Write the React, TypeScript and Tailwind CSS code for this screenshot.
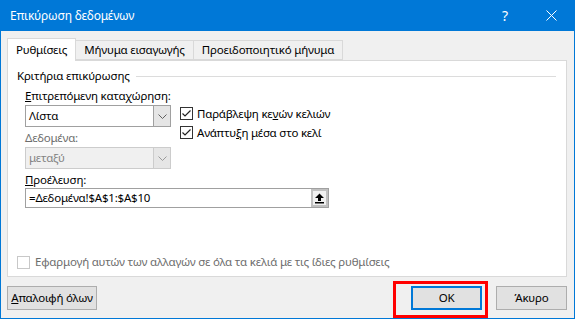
import React from 'react'

const font = "font-['Noto_Sans','DejaVu_Sans',sans-serif]"

function Chevron({ color = '#606060' }: { color?: string }) {
      return (
            <svg width="9" height="5" viewBox="0 0 9 5">
                  <path d="M0.5 0.5 L4.5 4.5 L8.5 0.5" fill="none" stroke={color} strokeWidth="1" />
            </svg>
      )
}

function Combo({ value, disabled }: { value: string; disabled?: boolean }) {
      return (
            <div
                  className={
                        'flex h-[22px] w-[146px] border ' +
                        (disabled ? 'border-[#cccccc] bg-[#f0f0f0] text-[#838383]' : 'border-[#a0a0a0] bg-white text-black')
                  }
            >
                  <div className="flex flex-1 items-center pl-[3px]">{value}</div>
                  <div
                        className={
                              'flex w-[17px] items-center justify-center border-l ' +
                              (disabled ? 'border-[#cccccc] bg-[#e6e6e6]' : 'border-[#a0a0a0] bg-[#e5e5e5]')
                        }
                  >
                        <Chevron color={disabled ? '#9a9a9a' : '#606060'} />
                  </div>
            </div>
      )
}

function Check({ checked, disabled }: { checked?: boolean; disabled?: boolean }) {
      return (
            <div
                  className={
                        'flex h-[13px] w-[13px] shrink-0 items-center justify-center border bg-white ' +
                        (disabled ? 'border-[#c8c8c8]' : 'border-[#333333]')
                  }
            >
                  {checked && (
                        <svg width="11" height="11" viewBox="0 0 11 11">
                              <path d="M1.5 5.5 L4 8 L9.5 2.5" fill="none" stroke="#222" strokeWidth="1.2" />
                        </svg>
                  )}
            </div>
      )
}

export default function App() {
      return (
            <div className={`${font} relative flex h-[319px] w-[575px] flex-col border-x border-b border-[#0078d7] bg-[#f0f0f0] text-[11.5px] leading-[16px] tracking-[-0.2px] text-black`}>
                  {/* Title bar */}
                  <div className="flex h-[31px] items-center bg-[#0078d7] pl-[9px] text-[12px] text-white">
                        <span>Επικύρωση δεδομένων</span>
                        <div className="flex-1" />
                        <span className="mr-[38px] text-[14px]">?</span>
                        <svg width="11" height="11" viewBox="0 0 11 11" className="mr-[17px]">
                              <path d="M0.5 0.5 L10.5 10.5 M10.5 0.5 L0.5 10.5" stroke="white" strokeWidth="1" />
                        </svg>
                  </div>

                  <div className="flex flex-1 flex-col pl-[6px] pr-[7px] pt-[7px]">
                        {/* Tabs */}
                        <div className="flex h-[22px] items-end">
                              <div className="relative z-10 -mb-px flex h-[23px] w-[69px] items-center justify-center border border-b-0 border-[#d9d9d9] bg-white">
                                    Ρυθμίσεις
                              </div>
                              <div className="flex h-[20px] w-[118px] items-center justify-center border border-l-0 border-[#d9d9d9] bg-[#f0f0f0]">
                                    Μήνυμα εισαγωγής
                              </div>
                              <div className="flex h-[20px] w-[149px] items-center justify-center border border-l-0 border-[#d9d9d9] bg-[#f0f0f0]">
                                    Προειδοποιητικό μήνυμα
                              </div>
                        </div>

                        {/* Panel */}
                        <div className="flex h-[217px] flex-col border border-[#d9d9d9] bg-white pl-[9px] pt-[7px]">
                              <div className="flex items-center">
                                    <span>Κριτήρια επικύρωσης</span>
                                    <div className="ml-[6px] mr-[10px] h-px flex-1 bg-[#dcdcdc]" />
                              </div>

                              <div className="flex pl-[8px] pt-[4px]">
                                    <div className="flex w-[146px] flex-col">
                                          <span className="whitespace-nowrap">
                                                <u>Ε</u>πιτρεπόμενη καταχώρηση:
                                          </span>
                                          <div className="mt-[1px]">
                                                <Combo value="Λίστα" />
                                          </div>
                                          <span className="mt-[3px] text-[#6d6d6d]">Δεδομένα:</span>
                                          <div className="mt-[1px]">
                                                <Combo value="μεταξύ" disabled />
                                          </div>
                                    </div>
                                    <div className="flex flex-col pl-[9px] pt-[16px]">
                                          <div className="flex h-[19px] items-center gap-[4px]">
                                                <Check checked />
                                                <span>
                                                      Παράβλεψη κε<u>ν</u>ών κελιών
                                                </span>
                                          </div>
                                          <div className="flex h-[19px] items-center gap-[4px]">
                                                <Check checked />
                                                <span>
                                                      Ανάπτυ<u>ξ</u>η μέσα στο κελί
                                                </span>
                                          </div>
                                    </div>
                              </div>

                              <div className="flex flex-col pl-[8px] pt-[3px]">
                                    <span>
                                          <u>Π</u>ροέλευση:
                                    </span>
                                    <div className="flex h-[20px] w-[304px] border border-[#a0a0a0] bg-white">
                                          <div className="flex flex-1 items-center pl-[3px]">=Δεδομένα!$A$1:$A$10</div>
                                          <div className="flex w-[17px] items-center justify-center border-2 border-[#c0c0c0] bg-[#f0f0f0]">
                                                <svg width="11" height="11" viewBox="0 0 11 11">
                                                      <path d="M5.5 0.5 L10 5 L7 5 L7 8 L4 8 L4 5 L1 5 Z" fill="#000" />
                                                      <rect x="1" y="9" width="9" height="1.5" fill="#000" />
                                                </svg>
                                          </div>
                                    </div>
                              </div>

                              <div className="mb-[6px] mt-auto flex h-[16px] items-center gap-[5px] text-[#6d6d6d]">
                                    <Check disabled />
                                    <span>Εφαρμογή αυτών των αλλαγών σε όλα τα κελιά με τις ίδιες ρυθμίσεις</span>
                              </div>
                        </div>

                        {/* Buttons */}
                        <div className="mt-[9px] flex items-center">
                              <div className="flex h-[24px] w-[90px] items-center justify-center border border-[#adadad] bg-[#e1e1e1]">
                                    <span>
                                          <u>Α</u>παλοιφή όλων
                                    </span>
                              </div>
                              <div className="flex-1" />
                              <div className="flex h-[24px] w-[71px] items-center justify-center border-2 border-[#0078d7] bg-[#e1e1e1]">
                                    OK
                              </div>
                              <div className="ml-[14px] flex h-[24px] w-[71px] items-center justify-center border border-[#adadad] bg-[#e1e1e1]">
                                    Άκυρο
                              </div>
                        </div>
                  </div>

                  {/* Highlight annotation */}
                  <div className="absolute left-[392px] top-[281px] h-[37px] w-[95px] border-[3px] border-[#ff0000]" />
            </div>
      )
}
